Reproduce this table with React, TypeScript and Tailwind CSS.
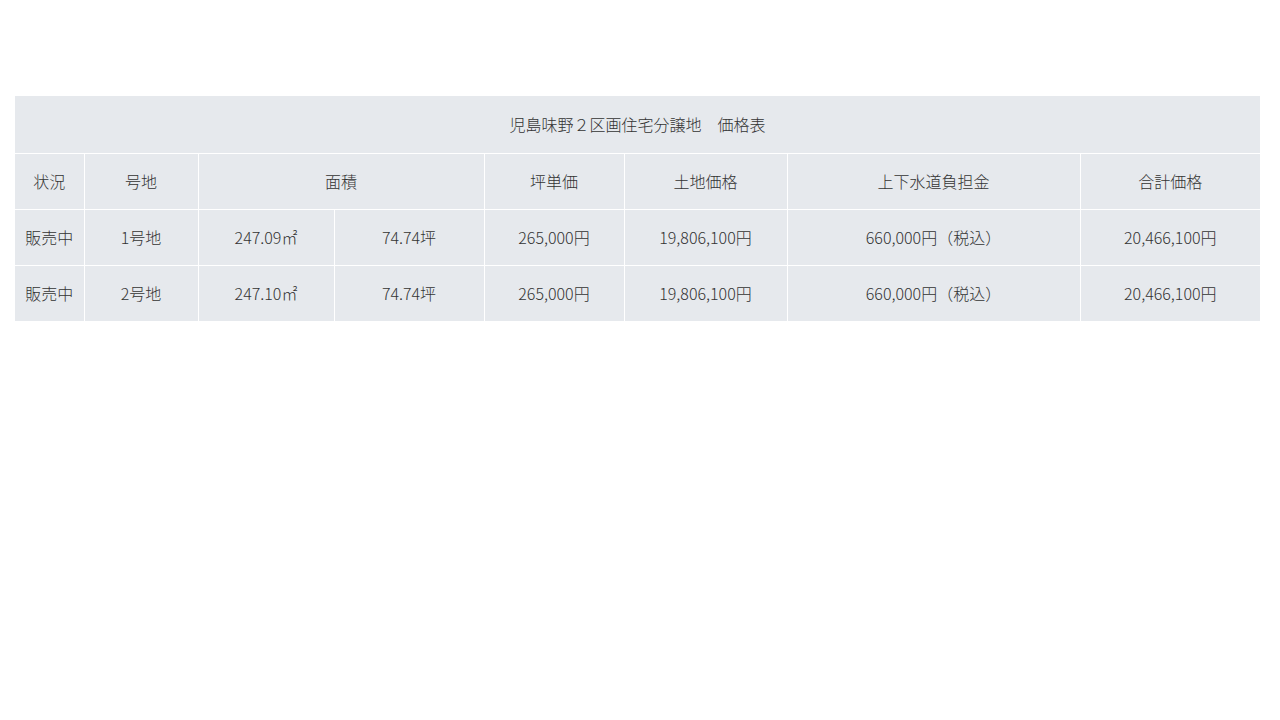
import React from "react";

const cell = "border border-white text-center align-middle font-light";

export default function App() {
  const rows = [
    ["販売中", "1号地", "247.09㎡", "74.74坪", "265,000円", "19,806,100円", "660,000円（税込）", "20,466,100円"],
    ["販売中", "2号地", "247.10㎡", "74.74坪", "265,000円", "19,806,100円", "660,000円（税込）", "20,466,100円"],
  ];
  const widths = [69, 114, 136, 150, 140, 163, 293, 180];
  return (
    <div
      className="w-[1280px] h-[720px] bg-white pt-[96px] pl-[15px] text-[16px] text-[#333333]"
      style={{ fontFamily: '"Noto Sans CJK JP", "Noto Sans", sans-serif' }}
    >
      <table className="table-fixed border-collapse w-[1245px] bg-[#e6e9ed] border-hidden">
        <colgroup>
          {widths.map((w, i) => (
            <col key={i} style={{ width: w }} />
          ))}
        </colgroup>
        <tbody>
          <tr className="h-[57px]">
            <td colSpan={8} className={cell}>児島味野２区画住宅分譲地　価格表</td>
          </tr>
          <tr className="h-[56px]">
            <td className={cell}>状況</td>
            <td className={cell}>号地</td>
            <td colSpan={2} className={cell}>面積</td>
            <td className={cell}>坪単価</td>
            <td className={cell}>土地価格</td>
            <td className={cell}>上下水道負担金</td>
            <td className={cell}>合計価格</td>
          </tr>
          {rows.map((r, i) => (
            <tr key={i} className="h-[56px]">
              {r.map((c, j) => (
                <td key={j} className={cell}>{c}</td>
              ))}
            </tr>
          ))}
        </tbody>
      </table>
    </div>
  );
}
